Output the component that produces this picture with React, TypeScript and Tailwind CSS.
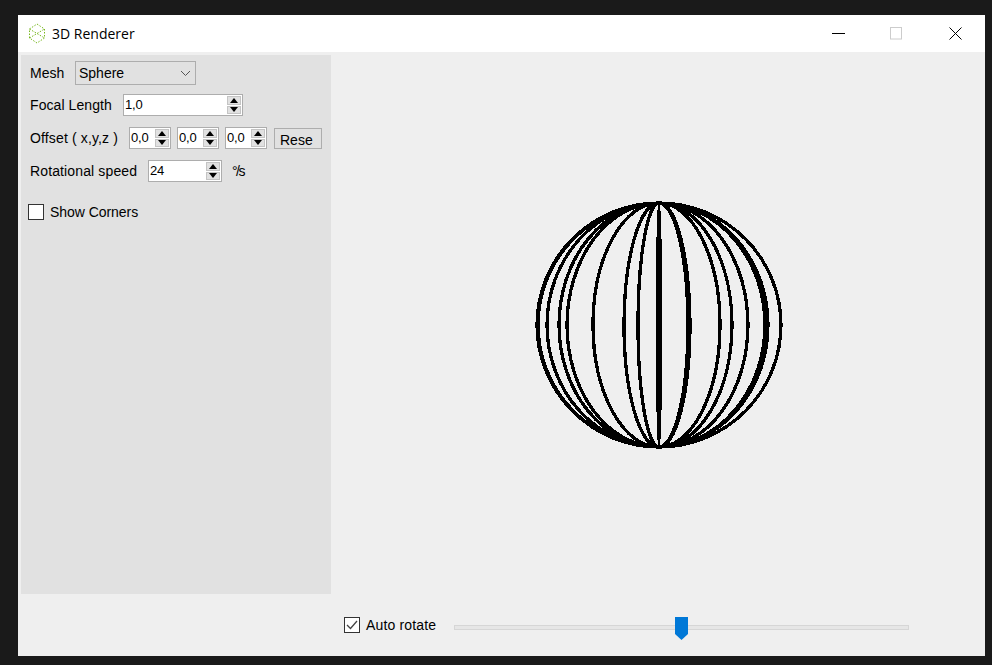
import React from "react";

const sans = "font-['Liberation_Sans',Arial,sans-serif]";
const meridians = [-122, -121, -112, -100, -92, -66, -35, -21, -1.5, 1.5, 29, 31, 61, 73, 89, 106, 109, 122];

function Spin({ value, w }: { value: string; w: string }) {
  return (
    <div className={`${w} h-[22px] flex items-stretch bg-white border border-[#adadad] pl-[1px] pr-[1px] py-[1px]`}>
      <span className="flex-1 min-w-0 text-[13px] leading-[17px] tracking-[-0.2px] text-black">{value}</span>
      <div className="w-[14px] flex flex-col gap-[1px] bg-white">
        <div className="flex-1 bg-[#e1e1e1] border border-[#c4c4c4] flex items-center justify-center">
          <svg width="8" height="5" viewBox="0 0 8 5"><path d="M4 0 L8 5 L0 5 Z" fill="#000" /></svg>
        </div>
        <div className="flex-1 bg-[#e1e1e1] border border-[#c4c4c4] flex items-center justify-center">
          <svg width="8" height="5" viewBox="0 0 8 5"><path d="M0 0 L8 0 L4 5 Z" fill="#000" /></svg>
        </div>
      </div>
    </div>
  );
}

function Logo() {
  return (
    <svg width="18" height="21" viewBox="0 0 18 21" fill="none" stroke="#78b81e" strokeWidth="1" strokeDasharray="1.5 1.5">
      <path d="M9 1 L16.5 6 L16.5 15 L9 20 L1.5 15 L1.5 6 Z" />
      <path d="M1.5 6 L9 10.5 L16.5 6 M1.5 15 L9 10.5 L16.5 15" />
    </svg>
  );
}

export default function App() {
  return (
    <div className={`${sans} w-[992px] h-[665px] bg-[#1a1a1a] pl-[18px] pr-[7px] pt-[15px] pb-[9px] overflow-hidden`}>
      <div className="w-full h-full bg-[#efefef] flex flex-col">
        <header className="h-[37px] bg-white flex items-center pl-[10px]">
          <Logo />
          <span className="ml-[6px] font-['Open_Sans',sans-serif] text-[14px] text-black">3D Renderer</span>
          <div className="ml-auto flex items-center">
            <svg width="58" height="14" viewBox="0 0 58 14"><path d="M0 6.5 H13" stroke="#000" strokeWidth="1" /></svg>
            <svg width="59" height="14" viewBox="0 0 59 14"><rect x="0.5" y="0.5" width="11" height="11.5" fill="none" stroke="#ccc" /></svg>
            <svg width="36" height="14" viewBox="0 0 36 14"><path d="M0.5 0.5 L12.5 12.5 M12.5 0.5 L0.5 12.5" stroke="#000" strokeWidth="1" /></svg>
          </div>
        </header>
        <div className="flex-1 flex pl-[3px] pt-[3px]">
          <aside className="w-[310px] h-[539px] bg-[#e1e1e1] flex flex-col text-[14px] text-black pl-[9px]">
            <div className="flex items-center h-[24px] mt-[6px]">
              <span className="w-[45px]">Mesh</span>
              <div className="w-[121px] h-[24px] border border-[#adadad] flex items-center justify-between pl-[3px] pr-[4px]">
                <span className="pt-[1px]">Sphere</span>
                <svg width="11" height="7" viewBox="0 0 11 7" fill="none"><path d="M1 1 L5.5 5.5 L10 1" stroke="#555" /></svg>
              </div>
            </div>
            <div className="flex items-center h-[22px] mt-[9px]">
              <span className="w-[93px] pt-[1px] tracking-[0.08px]">Focal Length</span>
              <Spin value="1,0" w="w-[120px]" />
            </div>
            <div className="flex items-center h-[22px] mt-[11px]">
              <span className="w-[99px] pt-[1px] tracking-[0.14px]">Offset ( x,y,z )</span>
              <div className="flex gap-[6px]">
                <Spin value="0,0" w="w-[42px]" />
                <Spin value="0,0" w="w-[42px]" />
                <Spin value="0,0" w="w-[42px]" />
              </div>
              <div className="ml-[7px] w-[48px] h-[21px] mt-[1px] border border-[#adadad] flex items-center pl-[5px] pt-[4px]">Rese</div>
            </div>
            <div className="flex items-center h-[22px] mt-[11px]">
              <span className="w-[118px] pt-[1px] tracking-[0.13px]">Rotational speed</span>
              <Spin value="24" w="w-[74px]" />
              <span className="ml-[10px] mt-[1px] tracking-[-1.5px]">°/s</span>
            </div>
            <label className="flex items-center h-[16px] mt-[22px] -ml-[2px]">
              <span className="w-[16px] h-[16px] bg-white border border-[#333]" />
              <span className="ml-[6px] tracking-[-0.05px]">Show Corners</span>
            </label>
          </aside>
          <main className="flex-1 min-w-0">
            <svg width="654" height="539" viewBox="331 55 654 539" fill="none" stroke="#000" strokeWidth="3.3" shapeRendering="crispEdges">
              {meridians.map((m, i) => (
                <path key={i} d={`M659 203 A${Math.abs(m)} 122 0 0 ${m > 0 ? 1 : 0} 659 447`} />
              ))}
            </svg>
          </main>
        </div>
        <footer className="h-[62px] flex items-center pl-[326px] text-[14px] text-black">
          <span className="w-[16px] h-[16px] bg-white border border-[#333] flex items-center justify-center">
            <svg width="12" height="10" viewBox="0 0 12 10" fill="none"><path d="M1 5 L4.5 8.5 L11 1" stroke="#444" strokeWidth="1.3" /></svg>
          </span>
          <span className="ml-[6px] w-[88px] tracking-[0.15px]">Auto rotate</span>
          <div className="relative w-[455px] h-[5px] mt-[4px] bg-[#e6e6e6] border border-[#d6d6d6]">
            <svg className="absolute left-[220px] -top-[9px]" width="13" height="23" viewBox="0 0 13 23"><path d="M0 0 H13 V17 L6.5 23 L0 17 Z" fill="#0078d7" /></svg>
          </div>
        </footer>
      </div>
    </div>
  );
}
